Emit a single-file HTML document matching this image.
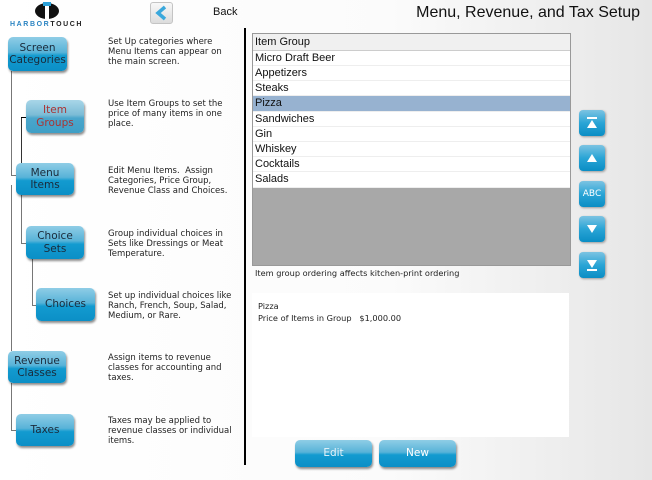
<!DOCTYPE html>
<html><head><meta charset="utf-8"><style>
*{margin:0;padding:0;box-sizing:border-box}
body{width:652px;height:480px;overflow:hidden;font-family:"Liberation Sans",sans-serif;background:linear-gradient(90deg,#fff 0%,#fbfbfb 60%,#e6e6e6 100%);position:relative}
.a{position:absolute}
.btn{position:absolute;border-radius:5px;background:linear-gradient(#8fcde6 0%,#58b3d8 45%,#139bd0 55%,#0b8fc6 100%);box-shadow:1px 2px 2px rgba(0,0,0,.45);color:#1a2a3a;font-family:"DejaVu Sans",sans-serif;font-size:10.5px;text-align:center;display:flex;align-items:center;justify-content:center;line-height:12.5px}
.d{position:absolute;left:108px;font-family:"DejaVu Sans",sans-serif;font-size:8.5px;line-height:10px;color:#222;width:136px;white-space:nowrap}
.ln{position:absolute;background:#777}
.row{position:absolute;left:253px;width:317px;height:15px;font-size:11px;line-height:15px;padding-left:2px;color:#111;border-bottom:1px solid #eee;background:#fff}
.rb{position:absolute;left:579px;width:26px;height:26px;border-radius:4px;background:linear-gradient(#7cc3e2,#2aa5d6 50%,#0a8dc4);box-shadow:1px 1px 2px rgba(0,0,0,.35);color:#fff;font-size:9px;display:flex;align-items:center;justify-content:center}
.v{font-family:"DejaVu Sans",sans-serif;font-size:8.2px;color:#222}
</style></head><body>
<svg class="a" style="left:34px;top:2px" width="26" height="17" viewBox="0 0 26 17"><ellipse cx="13" cy="9" rx="12" ry="8" fill="#111"/><rect x="11" y="0" width="4" height="17" fill="#fff"/><rect x="9" y="0" width="8" height="4" fill="#2aa0d8"/></svg>
<div class="a" style="left:10px;top:21px;font-size:7px;letter-spacing:1.6px;font-weight:bold;color:#2b84c2">HARBOR<span style="color:#222">TOUCH</span></div>
<div class="a" style="left:150px;top:2px;width:23px;height:22px;border-radius:3px;background:linear-gradient(#f8f8f8,#dcdcdc);border:1px solid #c4c4c4"></div>
<svg class="a" style="left:150px;top:2px" width="23" height="22"><path d="M15 5 L8 11 L15 17" stroke="#3aa8dc" stroke-width="3.5" fill="none"/></svg>
<div class="a" style="left:213px;top:6px;font-size:11px;color:#111">Back</div>
<div class="a" style="right:12px;top:4px;font-size:16px;color:#111">Menu, Revenue, and Tax Setup</div>
<div class="a" style="left:244px;top:28px;width:2px;height:437px;background:#000"></div>

<div class="ln" style="left:11px;top:71px;width:1px;height:105px"></div><div class="ln" style="left:11px;top:175px;width:6px;height:1px"></div>
<div class="ln" style="left:21px;top:117px;width:1px;height:48px;background:#333"></div><div class="ln" style="left:21px;top:117px;width:6px;height:1px;background:#000"></div>
<div class="ln" style="left:11px;top:185px;width:1px;height:166px"></div>
<div class="ln" style="left:21px;top:195px;width:1px;height:49px"></div><div class="ln" style="left:21px;top:243px;width:6px;height:1px"></div>
<div class="ln" style="left:32px;top:259px;width:1px;height:47px"></div><div class="ln" style="left:32px;top:305px;width:5px;height:1px"></div>
<div class="ln" style="left:11px;top:383px;width:1px;height:48px"></div><div class="ln" style="left:11px;top:430px;width:6px;height:1px"></div>

<div class="btn" style="left:8px;top:37px;width:59px;height:34px">Screen<br>Categories</div>
<div class="btn" style="left:26px;top:100px;width:58px;height:33px;color:#a33;background:linear-gradient(#a8d6e8,#7cbcd6 45%,#4aa6cc 55%,#3f9fc6)">Item<br>Groups</div>
<div class="btn" style="left:16px;top:163px;width:58px;height:32px">Menu<br>Items</div>
<div class="btn" style="left:26px;top:226px;width:58px;height:33px">Choice<br>Sets</div>
<div class="btn" style="left:36px;top:288px;width:59px;height:33px">Choices</div>
<div class="btn" style="left:8px;top:351px;width:58px;height:32px">Revenue<br>Classes</div>
<div class="btn" style="left:16px;top:414px;width:58px;height:32px">Taxes</div>

<div class="d" style="top:37px">Set Up categories where<br>Menu Items can appear on<br>the main screen.</div>
<div class="d" style="top:99px">Use Item Groups to set the<br>price of many items in one<br>place.</div>
<div class="d" style="top:166px">Edit Menu Items.&nbsp; Assign<br>Categories, Price Group,<br>Revenue Class and Choices.</div>
<div class="d" style="top:229px">Group individual choices in<br>Sets like Dressings or Meat<br>Temperature.</div>
<div class="d" style="top:291px">Set up individual choices like<br>Ranch, French, Soup, Salad,<br>Medium, or Rare.</div>
<div class="d" style="top:353px">Assign items to revenue<br>classes for accounting and<br>taxes.</div>
<div class="d" style="top:416px">Taxes may be applied to<br>revenue classes or individual<br>items.</div>

<div class="a" style="left:252px;top:33px;width:319px;height:233px;border:1px solid #999;background:#a8a8a8"></div>
<div class="row" style="top:34px;height:17px;line-height:17px;background:#f0f0f0;border-bottom:1px solid #ccc">Item Group</div>
<div class="row" style="top:51px">Micro Draft Beer</div>
<div class="row" style="top:66px">Appetizers</div>
<div class="row" style="top:81px">Steaks</div>
<div class="row" style="top:96px;height:16px;background:#97b2d0">Pizza</div>
<div class="row" style="top:112px">Sandwiches</div>
<div class="row" style="top:127px">Gin</div>
<div class="row" style="top:142px">Whiskey</div>
<div class="row" style="top:157px">Cocktails</div>
<div class="row" style="top:172px;height:16px">Salads</div>
<div class="a v" style="left:255px;top:268px">Item group ordering affects kitchen-print ordering</div>
<div class="a" style="left:252px;top:293px;width:317px;height:144px;background:#fff"></div>
<div class="a v" style="left:258px;top:300px;line-height:12px">Pizza<br>Price of Items in Group &nbsp;&nbsp;$1,000.00</div>

<div class="btn" style="left:295px;top:440px;width:77px;height:27px;color:#e8f4fa">Edit</div>
<div class="btn" style="left:379px;top:440px;width:77px;height:27px;color:#fff">New</div>

<div class="rb" style="top:110px"><svg width="14" height="14"><rect x="2" y="1" width="10" height="2" fill="#fff"/><path d="M7 4 L12 12 L2 12Z" fill="#fff"/></svg></div>
<div class="rb" style="top:145px"><svg width="14" height="12"><path d="M7 2 L12 10 L2 10Z" fill="#fff"/></svg></div>
<div class="rb" style="top:181px;font-family:'DejaVu Sans',sans-serif">ABC</div>
<div class="rb" style="top:216px"><svg width="14" height="12"><path d="M2 2 L12 2 L7 10Z" fill="#fff"/></svg></div>
<div class="rb" style="top:252px"><svg width="14" height="14"><path d="M2 2 L12 2 L7 10Z" fill="#fff"/><rect x="2" y="11" width="10" height="2" fill="#fff"/></svg></div>
</body></html>
